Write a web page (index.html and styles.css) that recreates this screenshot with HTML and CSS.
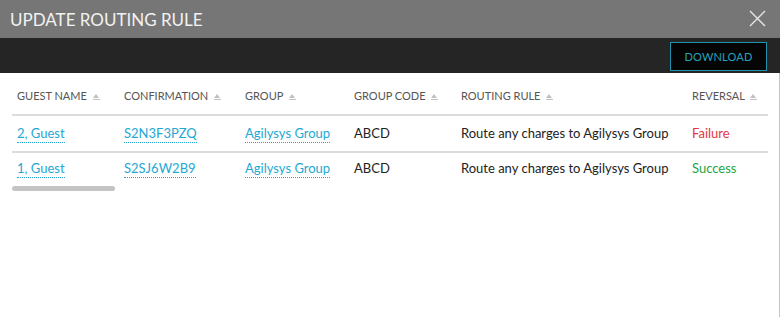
FILE: index.html
```html
<!DOCTYPE html>
<html lang="en">
<head>
    <meta charset="UTF-8">
    <meta name="viewport" content="width=device-width, initial-scale=1.0">
    <title>Update Routing Rule</title>
    <link rel="stylesheet" href="styles.css">
</head>
<body>
    <div class="dialog">
        <div class="dialog-header">
            <h2>UPDATE ROUTING RULE</h2>
            <button class="close-btn" aria-label="Close">
                <svg width="17" height="17" viewBox="0 0 17 17">
                    <path d="M1 1 L16 16 M16 1 L1 16" stroke="#e6e6e6" stroke-width="1.4" fill="none"/>
                </svg>
            </button>
        </div>
        <div class="toolbar">
            <button class="download-btn">DOWNLOAD</button>
        </div>
        <div class="dialog-body">
            <div class="table-wrap">
                <table class="rule-table">
                    <colgroup>
                        <col style="width: 107px">
                        <col style="width: 121px">
                        <col style="width: 109px">
                        <col style="width: 107px">
                        <col style="width: 231px">
                        <col>
                    </colgroup>
                    <thead>
                        <tr>
                            <th>GUEST NAME <span class="sort"></span></th>
                            <th>CONFIRMATION <span class="sort"></span></th>
                            <th>GROUP <span class="sort"></span></th>
                            <th>GROUP CODE <span class="sort"></span></th>
                            <th>ROUTING RULE <span class="sort"></span></th>
                            <th>REVERSAL <span class="sort"></span></th>
                        </tr>
                    </thead>
                    <tbody>
                        <tr>
                            <td><a href="#">2, Guest</a></td>
                            <td><a href="#">S2N3F3PZQ</a></td>
                            <td><a href="#">Agilysys Group</a></td>
                            <td>ABCD</td>
                            <td>Route any charges to Agilysys Group</td>
                            <td class="status-fail">Failure</td>
                        </tr>
                        <tr>
                            <td><a href="#">1, Guest</a></td>
                            <td><a href="#">S2SJ6W2B9</a></td>
                            <td><a href="#">Agilysys Group</a></td>
                            <td>ABCD</td>
                            <td>Route any charges to Agilysys Group</td>
                            <td class="status-ok">Success</td>
                        </tr>
                    </tbody>
                </table>
            </div>
            <div class="scroll-thumb"></div>
        </div>
    </div>
</body>
</html>
```

FILE: styles.css
```css
body {
    margin: 0;
    font-family: Lato, 'Liberation Sans', sans-serif;
    background-color: #ffffff;
    color: #222222;
}
.dialog {
    width: 780px;
    height: 317px;
    display: flex;
    flex-direction: column;
}
.dialog-header {
    background-color: #767676;
    height: 38px;
    display: flex;
    align-items: center;
    justify-content: space-between;
    padding: 0 14px 0 10px;
}
.dialog-header h2 {
    margin: 0;
    font-size: 17px;
    font-weight: 400;
    color: #f2f2f2;
}
.close-btn {
    background: none;
    border: none;
    padding: 0;
    width: 17px;
    height: 17px;
    cursor: pointer;
    margin-top: -2px;
}
.close-btn svg {
    display: block;
}
.toolbar {
    background-color: #252525;
    height: 35px;
    display: flex;
    align-items: center;
    justify-content: flex-end;
    padding-right: 13px;
}
.download-btn {
    width: 97px;
    height: 29px;
    background-color: #050505;
    border: 1px solid #1f93ab;
    color: #25a3bd;
    font-family: Lato, 'Liberation Sans', sans-serif;
    font-size: 11px;
    letter-spacing: 0.2px;
    cursor: pointer;
    margin-top: 1px;
}
.dialog-body {
    flex: 1;
    border-right: 1px solid #c4c4c4;
    padding: 6px 11px 0 12px;
}
.rule-table {
    width: 756px;
    border-collapse: collapse;
    table-layout: fixed;
}
.rule-table th {
    text-align: left;
    font-size: 11px;
    font-weight: 400;
    color: #555555;
    padding: 10px 5px 12px;
    border-bottom: 2px solid #dcdcdc;
    white-space: nowrap;
}
.rule-table td {
    font-size: 13px;
    padding: 7px 5px 8px;
    border-bottom: 2px solid #dcdcdc;
    white-space: nowrap;
}
.rule-table tbody tr:first-child td {
    padding-top: 9px;
    padding-bottom: 10px;
}
.rule-table tbody tr:last-child td {
    border-bottom: none;
}
.rule-table a {
    color: #1ea8d3;
    text-decoration: none;
    border-bottom: 1px dotted #1ea8d3;
    padding-bottom: 1px;
}
.sort {
    display: inline-block;
    width: 7px;
    height: 6px;
    margin-left: 3px;
    vertical-align: 0;
    background:
        linear-gradient(#c0c0c0, #c0c0c0) 0 5px / 7px 1px no-repeat;
    position: relative;
}
.sort::before {
    content: "";
    position: absolute;
    left: 0;
    top: 0;
    border-left: 3.5px solid transparent;
    border-right: 3.5px solid transparent;
    border-bottom: 4px solid #c0c0c0;
}
.status-fail {
    color: #e2363f;
}
.status-ok {
    color: #23a744;
}
.scroll-thumb {
    width: 103px;
    height: 5px;
    margin-top: 2px;
    background-color: #c4c4c4;
    border-radius: 3px;
}
```
